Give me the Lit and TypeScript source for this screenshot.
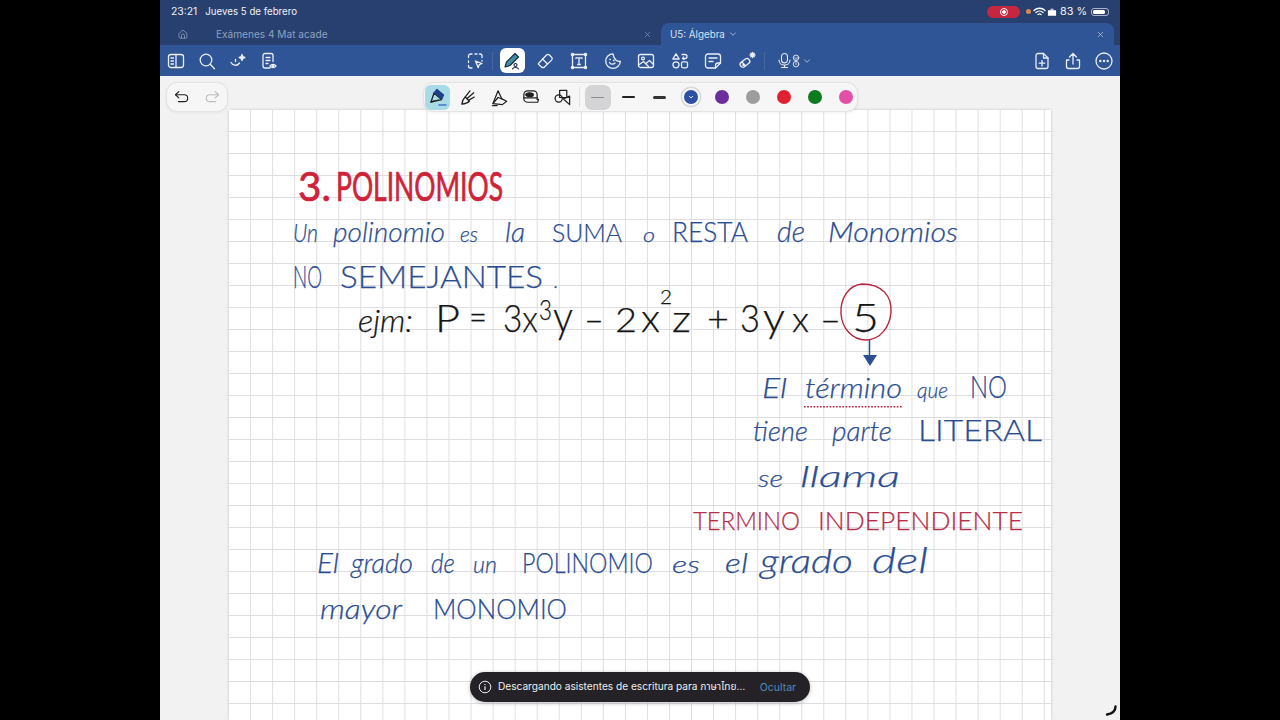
import { LitElement, html, css, svg } from "lit";
import { customElement } from "lit/decorators.js";

type W = [string, number, number, number, number, string];
// text, x, right edge, baseline, font size, class
const words: W[] = [
  ["3.", 298, 331, 201, 41, "title"],
  ["POLINOMIOS", 336, 503, 201, 40, "title"],
  ["Un", 293, 318, 242, 26, "cur blue"],
  ["polinomio", 333, 445, 242, 27, "cur blue"],
  ["es", 460, 478, 242, 22, "cur blue"],
  ["la", 505, 525, 242, 28, "cur blue"],
  ["SUMA", 552, 622, 242, 26, "cap blue"],
  ["o", 643, 655, 242, 20, "cur blue"],
  ["RESTA", 672, 748, 242, 28, "cap blue"],
  ["de", 777, 805, 242, 30, "cur blue"],
  ["Monomios", 828, 958, 242, 28, "cur blue"],
  ["NO", 293, 322, 288, 32, "cap blue"],
  ["SEMEJANTES", 340, 543, 288, 32, "cap blue"],
  [".", 553, 558, 288, 20, "cap blue"],
  ["ejm:", 358, 413, 332, 32, "cur black"],
  ["P", 435, 460, 332, 38, "cap black"],
  ["=", 469, 487, 330, 36, "cap black"],
  ["3x", 503, 538, 332, 38, "cap black"],
  ["3", 539, 552, 320, 28, "cap black"],
  ["y", 553, 573, 332, 44, "cap black"],
  ["–", 584, 604, 332, 36, "cap black"],
  ["2", 615, 637, 332, 34, "cap black"],
  ["x", 641, 660, 332, 40, "cap black"],
  ["2", 660, 672, 304, 20, "cap black"],
  ["z", 672, 691, 332, 38, "cap black"],
  ["+", 707, 729, 332, 36, "cap black"],
  ["3", 740, 760, 332, 38, "cap black"],
  ["y", 763, 785, 332, 42, "cap black"],
  ["x", 792, 809, 332, 36, "cap black"],
  ["–", 820, 841, 332, 36, "cap black"],
  ["5", 852, 879, 332, 40, "cap black"],
  ["El", 762, 787, 398, 28, "cur blue"],
  ["término", 805, 902, 398, 28, "cur blue"],
  ["que", 917, 948, 398, 22, "cur blue"],
  ["NO", 970, 1007, 398, 32, "cap blue"],
  ["tiene", 753, 808, 441, 28, "cur blue"],
  ["parte", 832, 892, 441, 28, "cur blue"],
  ["LITERAL", 918, 1042, 441, 29, "cap blue"],
  ["se", 758, 783, 487, 24, "cur blue"],
  ["llama", 800, 900, 487, 30, "cur blue"],
  ["TERMINO", 693, 800, 530, 25, "cap rust"],
  ["INDEPENDIENTE", 818, 1023, 530, 25, "cap rust"],
  ["El", 317, 339, 573, 28, "cur blue"],
  ["grado", 351, 413, 573, 28, "cur blue"],
  ["de", 431, 455, 573, 28, "cur blue"],
  ["un", 473, 497, 573, 24, "cur blue"],
  ["POLINOMIO", 522, 653, 573, 28, "cap blue"],
  ["es", 672, 700, 573, 24, "cur blue"],
  ["el", 725, 748, 573, 28, "cur blue"],
  ["grado", 760, 853, 573, 34, "cur blue"],
  ["del", 872, 928, 573, 36, "cur blue"],
  ["mayor", 320, 402, 619, 28, "cur blue"],
  ["MONOMIO", 433, 567, 619, 28, "cap blue"],
];

const ic = (body: unknown, size = 20) =>
  html`<svg class="ic" width=${size} height=${size} viewBox="0 0 20 20" fill="none" stroke="currentColor" stroke-width="1.300" stroke-linecap="round" stroke-linejoin="round">${body}</svg>`;

const icons = {
  panel: svg`<rect x="2.500" y="3.500" width="15" height="13" rx="2.500"/><path d="M10 3.500v13M5 7h2.500M5 10h2.500M5 13h2.500"/>`,
  search: svg`<circle cx="9" cy="9" r="5.800"/><path d="M13.200 13.200l4.300 4.600"/>`,
  spark: svg`<path d="M3 11.500c1.500 3 6 4 8.500.5"/><path d="M14 3.500c.3 2 .9 2.600 2.800 3-1.900.4-2.500 1-2.800 3-.3-2-.9-2.600-2.800-3 1.900-.4 2.500-1 2.800-3z" fill="currentColor"/><path d="M7.500 8.500v2"/>`,
  docEye: svg`<path d="M11 17H6a2 2 0 0 1-2-2V4.500a2 2 0 0 1 2-2h6a2 2 0 0 1 2 2v6"/><path d="M7 6.500h4M7 9.500h4M7 12.500h2"/><path d="M11 15c1.500-2 4.500-2 6 0-1.500 2-4.500 2-6 0z"/><circle cx="14" cy="15" r=".6"/>`,
  select: svg`<path d="M7 3h-1.500a2 2 0 0 0-2 2v1.500M3.500 10v1.500M3.500 14.500v.5a2 2 0 0 0 2 2H7M10 3h2M14.500 3h.5a2 2 0 0 1 2 2v1.500M17 9.500v.5"/><path d="M10.500 10l6.500 2.500-2.800 1.200-1 3z"/>`,
  eraser: svg`<path d="M3.500 12.500l8-8.500a2 2 0 0 1 2.800 0l2.300 2.300a2 2 0 0 1 0 2.800l-7.600 7.400H7l-3.500-3.200a1.800 1.800 0 0 1 0-.8z"/><path d="M7.500 8l5 5"/>`,
  text: svg`<rect x="3.500" y="3.500" width="13" height="13"/><path d="M7 7.500V6.800h6v.7M10 6.800v6.700M8.700 13.500h2.600"/><g fill="currentColor"><circle cx="3.500" cy="3.500" r="1.100"/><circle cx="16.500" cy="3.500" r="1.100"/><circle cx="3.500" cy="16.500" r="1.100"/><circle cx="16.500" cy="16.500" r="1.100"/></g>`,
  sticker: svg`<path d="M10 2.800a7.300 7.300 0 1 0 7.300 7.400c-3 .5-6.500-1.500-7.300-7.400z"/><path d="M6.500 11.500c1 2 4 2.300 5.500.5M6.800 8.500h.6M10.500 9.500h.6"/>`,
  image: svg`<rect x="2.500" y="3.500" width="15" height="13" rx="2"/><circle cx="7" cy="7.500" r="1.400"/><path d="M2.500 14l5-3.500 5 5M10.500 12l3-2.500 4 4"/>`,
  shapes: svg`<path d="M6 2.800l3.200 5.200H2.800z"/><circle cx="6" cy="13.800" r="3"/><rect x="11.500" y="10.800" width="6" height="6" rx="1.500"/><path d="M12 3.500h3a2 2 0 0 1 0 4h-2M13.500 6l-1 1.500 1.500 1"/>`,
  note: svg`<path d="M12.500 17H5a2.500 2.500 0 0 1-2.500-2.500V5.500A2.500 2.500 0 0 1 5 3h10a2.500 2.500 0 0 1 2.500 2.500V12z"/><path d="M6 7h8M6 10.500h4M12.500 17v-2.500a2.500 2.500 0 0 1 2.500-2.500h2.500"/>`,
  wand: svg`<rect x="2.500" y="9" width="10.500" height="5.500" rx="2.500" transform="rotate(-38 8 11.500)"/><path d="M5.500 11.500l2.800 3.200"/><circle cx="6.500" cy="14" r=".6"/><path d="M15.500 1.500v5M13 4h5M13.800 2.300l3.400 3.400M17.200 2.300l-3.400 3.400"/>`,
  mic: svg`<rect x="6.500" y="1.800" width="7" height="11" rx="3.500"/><path d="M3.500 9.500c0 8 13 8 13 0M10 16v2M6.500 18.200h7"/>`,
  user: svg`<circle cx="10" cy="5.500" r="4"/><path d="M8.300 4.500v.5M11.700 4.500v.5M8.500 7h3"/><circle cx="10" cy="14.500" r="4"/><path d="M10 12.500v2.500"/>`,
  newPage: svg`<path d="M4 4.500a2 2 0 0 1 2-2h5.500L16 7v8.500a2 2 0 0 1-2 2H6a2 2 0 0 1-2-2z"/><path d="M11.500 2.500V7H16M10 9.500v5.500M7.300 12.200h5.400"/>`,
  share: svg`<path d="M10 13V2.500M6.500 6L10 2.500 13.500 6M6 9H3.500v6.500a2 2 0 0 0 2 2h9a2 2 0 0 0 2-2V9H14"/>`,
  more: svg`<circle cx="10" cy="10" r="8"/><g fill="currentColor" stroke="none"><circle cx="6.300" cy="10" r="1.200"/><circle cx="10" cy="10" r="1.200"/><circle cx="13.700" cy="10" r="1.200"/></g>`,
  home: svg`<path d="M3.500 9l6.500-5.500L16.500 9v6a2 2 0 0 1-2 2h-9a2 2 0 0 1-2-2z"/><path d="M7.500 17v-4.500a2.500 2.500 0 0 1 5 0V17"/>`,
  x: svg`<path d="M5 5l10 10M15 5L5 15"/>`,
  chev: svg`<path d="M5 7.500l5 5 5-5"/>`,
  undo: svg`<path d="M6.500 4L2.800 7.500 6.500 11"/><path d="M3 7.500h9.500a3.800 3.800 0 0 1 0 7.600H6"/>`,
  redo: svg`<path d="M13.500 4l3.700 3.500L13.500 11"/><path d="M17 7.500H7.500a3.800 3.800 0 0 0 0 7.600H14"/>`,
  penSel: svg`<path d="M3 15l3-9 7.500 6.500z"/><path d="M6 6l3-3.500 6.500 5.500-2 4.500" fill="#1f3f86" stroke="#1f3f86"/><path d="M3 15l3-1"/><path d="M11 18h7" stroke="#3f78c8" stroke-width="1.600"/>`,
  brush: svg`<path d="M3 17c.3-3 1.300-5.500 3.500-7.500l4.500 4.500c-2 2-4.500 2.800-8 3z"/><path d="M6.500 9.500l5-6.500M8.500 11l7-6M10 13l6-3.500"/>`,
  marker: svg`<path d="M3 16.500L8.500 3l4 8.500 5 2.500-4.500 3.500z"/><path d="M3.500 16l5-6 4 1.500M2.500 18.500h5"/>`,
  tape: svg`<path d="M3 7a4 4 0 0 1 4-4h6a4 4 0 0 1 4 4v5h1.500l-1 3H7a4 4 0 0 1-4-4z"/><ellipse cx="9" cy="7" rx="4" ry="2" fill="currentColor"/><path d="M3 10.500h14"/>`,
  shapePen: svg`<rect x="7" y="2.500" width="7.500" height="7.500"/><circle cx="6" cy="11" r="3.800"/><path d="M11 11.500l6.500-3v9z"/>`,
};

@customElement("app-root")
export class AppRoot extends LitElement {
  static styles = css`
    :host { display: block; width: 1280px; height: 720px; overflow: hidden; background: #000;
      font-family: Inter, "Noto Sans", "Noto Sans Thai", "DejaVu Sans", sans-serif; }
    .frame { width: 960px; height: 720px; margin: 0 auto; display: flex; flex-direction: column; position: relative; }
    .ic { display: block; flex: none; }
    .status { height: 23px; background: #27406f; color: #eef1f7; display: flex; align-items: center;
      padding: 0 11px 0 11px; font-size: 10.400px; flex: none; }
    .status .date { margin-left: 8px; font-size: 9.700px; }
    .status .right { margin-left: auto; display: flex; align-items: center; }
    .rec { width: 33px; height: 12px; border-radius: 6px; background: #c4273e; display: flex; align-items: center; justify-content: center; }
    .rec i { width: 8px; height: 8px; border-radius: 50%; border: 1.500px solid #fff; box-sizing: border-box; display: block; background: radial-gradient(#fff 0 1.500px, transparent 2px); }
    .dot { width: 5px; height: 5px; border-radius: 50%; background: #dc8a4b; margin: 0 2px 0 6px; }
    .case { margin-left: 1px; }
    .pct { margin-left: 3px; font-size: 10.800px; }
    .batt { width: 18px; height: 8px; margin-left: 4px; border: 1px solid #a9b4c9; border-radius: 3px; padding: 1px; box-sizing: border-box; display: flex; }
    .batt b { display: block; width: 83%; background: #fff; border-radius: 1.500px; }
    .tabs { height: 22px; background: #27406f; display: flex; flex: none; color: #8ea0bf; font-size: 10.100px; }
    .home { width: 43px; display: flex; align-items: center; padding-left: 17px; box-sizing: border-box; }
    .inactive { width: 458px; display: flex; align-items: center; padding-left: 13px; padding-right: 9px; box-sizing: border-box; justify-content: space-between; }
    .active { width: 453px; background: #2f5596; border-radius: 8px 8px 0 0; display: flex; align-items: center;
      padding: 0 9px 0 9px; box-sizing: border-box; color: #d8e0ee; font-size: 9.800px; }
    .active .end { margin-left: auto; }
    .active .ch { margin-left: 3px; }
    .toolbar { height: 31px; background: #2f5596; color: #eaeef6; display: flex; align-items: center; flex: none; }
    .tb { width: 31px; height: 25px; display: flex; align-items: center; justify-content: center; flex: none; }
    .center { display: flex; align-items: center; margin-left: 174px; }
    .center .tb { width: 33.600px; }
    .selected { width: 25px !important; height: 25px; background: #fff; border-radius: 6px; margin: 0 4px 0 7px; color: #1e2b44; }
    .sep { width: 1px; height: 18px; background: #47689f; flex: none; }
    .mics { display: flex; align-items: center; margin-left: 11px; color: #e4e9f3; }
    .mics .u { margin: 0 -1px 0 -4px; }
    .rights { display: flex; margin-left: auto; margin-right: 1px; }
    .canvas { flex: 1; min-height: 0; background: #f2f2f2; position: relative; overflow: hidden; }
    .paper { width: 822px; height: 610px; margin: 34px 0 0 69px; background-color: #fff; position: relative;
      background-image: linear-gradient(to right, transparent calc(100% - 1.200px), #dedee2 0),
        linear-gradient(to bottom, transparent calc(100% - 1.200px), #dedee2 0);
      background-size: 22.050px 22px; box-shadow: 0 0 3px rgba(0,0,0,.18); }
    .ink { position: absolute; inset: 0; display: block; }
    .cur { font-family: Lato, "Liberation Sans", sans-serif; font-style: italic; font-weight: 300; }
    .cap { font-family: Lato, "Liberation Sans", sans-serif; font-weight: 300; }
    .title { fill: #cf2339; font-family: Lato, "Liberation Sans", sans-serif; font-weight: 400; stroke: #cf2339; stroke-width: .7px; }
    .blue { fill: #2b4d92; stroke: #2b4d92; stroke-width: .25px; }
    .black { fill: #151515; stroke: #151515; stroke-width: .25px; }
    .rust { fill: #b6304a; stroke: #b6304a; stroke-width: .25px; }
    .pill { position: absolute; top: 6px; height: 30px; background: #f6f6f6; border: 1px solid #e3e3e3; border-radius: 11px;
      box-sizing: border-box; display: flex; align-items: center; box-shadow: 0 1px 3px rgba(0,0,0,.06); }
    .undo { left: 6px; width: 62px; padding: 0 6px; justify-content: space-between; color: #222; }
    .undo .off { color: #bdbdbd; }
    .pens { left: 263px; width: 435px; padding-left: 1px; color: #202020; }
    .pt { width: 31.200px; height: 25px; flex: none; display: flex; align-items: center; justify-content: center; }
    .pt.on { width: 25px; background: #a9dbe6; border-radius: 6px; margin-right: 3px; }
    .pens .div { width: 1px; height: 20px; background: #e0e0e0; margin: 0 5px 0 1px; flex: none; }
    .ln { width: 26px; height: 25px; display: flex; align-items: center; justify-content: center; flex: none; margin-right: 5px; border-radius: 7px; }
    .ln.on { background: #d4d4d6; }
    .ln i { display: block; width: 13px; background: #222; border-radius: 2px; }
    .ln.on i { height: 1px; background: #8d8d90; }
    .ln.m i { height: 1.600px; }
    .ln.h i { height: 3px; background: #333; }
    .swatches { display: flex; align-items: center; gap: 17px; margin-left: 6px; }
    .sw { width: 14px; height: 14px; border-radius: 50%; display: flex; align-items: center; justify-content: center; flex: none; }
    .sw.cur-sw { box-shadow: 0 0 0 2px #f6f6f6, 0 0 0 3.500px #d4d8e0; }
    .sw svg { display: block; }
    .toast { position: absolute; left: 310px; top: 596px; width: 340px; height: 30px; border-radius: 15px; background: #242226;
      color: #eee; display: flex; align-items: center; padding: 0 14px 0 8px; box-sizing: border-box; font-size: 10.150px;
      box-shadow: 0 1px 4px rgba(0,0,0,.25); white-space: nowrap; }
    .toast .msg { margin-left: 6px; }
    .toast .hide { margin-left: auto; color: #5588bb; font-size: 10.500px; }
    .spin { position: absolute; right: 2px; bottom: 3px; display: block; }
  `;

  tb(i: unknown, size = 20) { return html`<div class="tb">${ic(i, size)}</div>`; }

  render() {
    const colors = ["#6a2f9c", "#9d9d9d", "#e0212f", "#0d7a1e", "#e44fa8"];
    return html`<div class="frame">
      <div class="status">
        <span>23:21</span><span class="date">Jueves 5 de febrero</span>
        <div class="right">
          <div class="rec"><i></i></div><div class="dot"></div>
          <svg class="ic" width="13" height="10" viewBox="0 0 13 10" fill="none" stroke="#fff" stroke-width="1.300" stroke-linecap="round"><path d="M1 3.500c3-3 8-3 11 0M3 5.500c2-1.800 5-1.800 7 0M5 7.500c.8-.7 2.200-.7 3 0"/></svg>
          <svg class="ic case" width="10" height="10" viewBox="0 0 11 10"><path fill="#fff" d="M1 3h3V1.500h3V3h3v6H1zM4.800 2.200V3h1.400v-.8z"/></svg>
          <span class="pct">83 %</span>
          <div class="batt"><b></b></div>
        </div>
      </div>
      <div class="tabs">
        <div class="home">${ic(icons.home, 12)}</div>
        <div class="inactive"><span>Exámenes 4 Mat acade</span>${ic(icons.x, 9)}</div>
        <div class="active"><span>U5: Álgebra</span><span class="ch">${ic(icons.chev, 10)}</span><span class="end">${ic(icons.x, 9)}</span></div>
      </div>
      <div class="toolbar">
        ${this.tb(icons.panel)}${this.tb(icons.search)}${this.tb(icons.spark)}${this.tb(icons.docEye)}
        <div class="center">
          ${this.tb(icons.select)}
          <div class="sep"></div>
          <div class="tb selected"><svg class="ic" width="20" height="20" viewBox="0 0 20 20" fill="none" stroke="#1e2b44" stroke-width="1.200" stroke-linejoin="round" stroke-linecap="round"><path d="M3 16l1.500-5L13 2.500l3.500 3.500L8 14.500z" fill="#3f8fa6"/><circle cx="13.500" cy="14" r="1.500"/><path d="M10.500 18c.5-2 5.500-2 6 0"/></svg></div>
          ${this.tb(icons.eraser)}${this.tb(icons.text)}${this.tb(icons.sticker)}${this.tb(icons.image)}${this.tb(icons.shapes)}${this.tb(icons.note)}${this.tb(icons.wand)}
          <div class="sep"></div>
          <div class="mics">${ic(icons.mic, 17)}<span class="u">${ic(icons.user, 14)}</span>${ic(icons.chev, 10)}</div>
        </div>
        <div class="rights">${this.tb(icons.newPage)}${this.tb(icons.share)}${this.tb(icons.more)}</div>
      </div>
      <div class="canvas">
        <div class="paper">
          <svg class="ink" width="822" height="610" viewBox="229 110 822 610">
            ${words.map(([t, x, r, y, s, c]) => svg`<text class=${c} x=${x} y=${y} font-size=${s} textLength=${r - x} lengthAdjust="spacingAndGlyphs">${t}</text>`)}
            <path d="M862 284c-13 1-22 14-21 30 1 14 11 26 25 26 14 0 24-13 25-28 1-15-8-28-29-28z" fill="none" stroke="#b5283c" stroke-width="1.400"/>
            <path d="M869.500 340v18" stroke="#2b4d92" stroke-width="1.500"/>
            <path d="M863 355h14l-7 11z" fill="#2b4d92"/>
            <path d="M804 406.800h98" stroke="#b01f35" stroke-width="1.600" stroke-dasharray="1.600 1.600"/>
          </svg>
        </div>
        <div class="pill undo">${ic(icons.undo, 18)}<span class="off">${ic(icons.redo, 18)}</span></div>
        <div class="pill pens">
          <div class="pt on">${ic(icons.penSel, 20)}</div>
          <div class="pt">${ic(icons.brush, 19)}</div><div class="pt">${ic(icons.marker, 19)}</div>
          <div class="pt">${ic(icons.tape, 19)}</div><div class="pt">${ic(icons.shapePen, 19)}</div>
          <div class="div"></div>
          <div class="ln on"><i></i></div><div class="ln m"><i></i></div><div class="ln h"><i></i></div>
          <div class="swatches">
            <div class="sw cur-sw" style="background:#2c4fa3"><svg width="6" height="4" viewBox="0 0 6 4" fill="none" stroke="#dfe6f5" stroke-width="1"><path d="M1 1l2 2 2-2"/></svg></div>
            ${colors.map((c) => html`<div class="sw" style="background:${c}"></div>`)}
          </div>
        </div>
        <div class="toast">
          <svg class="ic" width="14" height="14" viewBox="0 0 14 14" fill="none" stroke="#eee" stroke-width="1"><circle cx="7" cy="7" r="5.800"/><path d="M7 6.300v3.700M7 4v1" stroke-width="1.200"/></svg>
          <span class="msg">Descargando asistentes de escritura para ภาษาไทย…</span>
          <span class="hide">Ocultar</span>
        </div>
        <svg class="spin" width="14" height="12" viewBox="0 0 14 12" fill="none" stroke="#111" stroke-width="2.400" stroke-linecap="round"><path d="M11.500 1.500c0 4-3 7-8.500 8"/></svg>
      </div>
    </div>`;
  }
}
